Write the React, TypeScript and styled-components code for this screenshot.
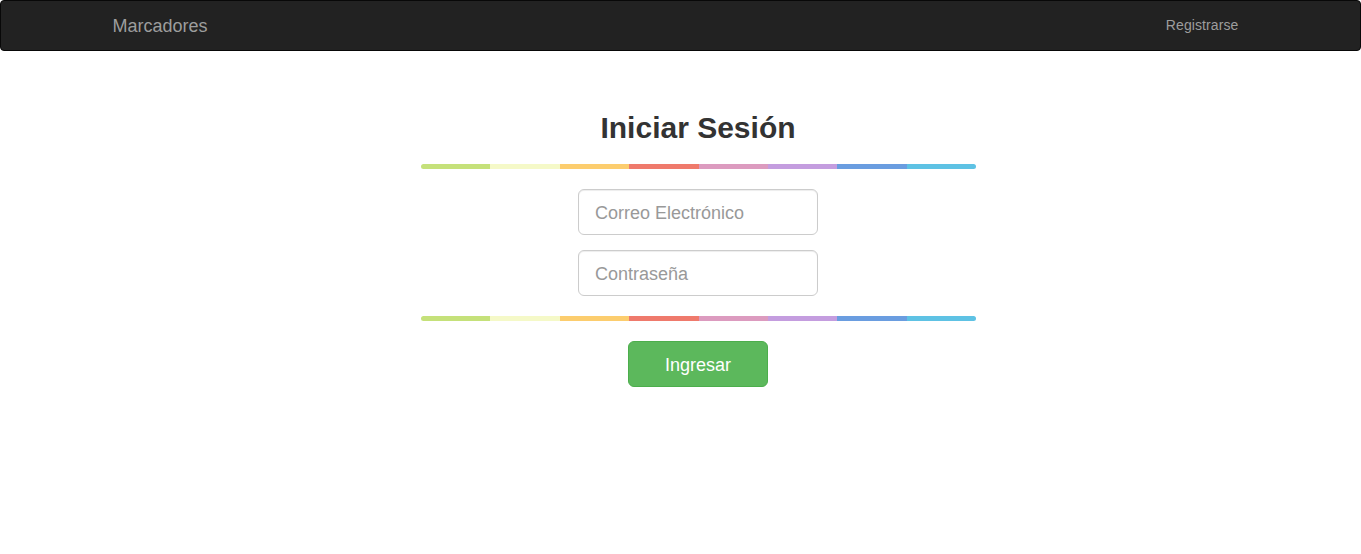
import React from "react";
import styled, { createGlobalStyle } from "styled-components";

const GlobalStyle = createGlobalStyle`
  * { box-sizing: border-box; }
  body {
    margin: 0;
    background: #fff;
    font-family: "Liberation Sans", Arial, Helvetica, sans-serif;
    font-size: 14px;
    color: #333;
  }
`;

const Navbar = styled.nav`
  height: 51px;
  background: #222;
  border: 1px solid #080808;
  border-radius: 4px;
`;

const NavInner = styled.div`
  width: 1170px;
  margin: 0 auto;
  height: 100%;
  display: flex;
  align-items: center;
  justify-content: space-between;
  padding: 0 12px 0 17px;
`;

const Brand = styled.a`
  font-size: 18px;
  line-height: 20px;
  color: #9d9d9d;
  text-decoration: none;
  padding-top: 1px;
`;

const NavLink = styled.a`
  font-size: 14px;
  line-height: 20px;
  color: #9d9d9d;
  text-decoration: none;
  padding: 0 15px 1px 15px;
  letter-spacing: 0.1px;
`;

const Main = styled.main`
  display: flex;
  flex-direction: column;
  align-items: center;
  padding: 60px 0 0 35px;
`;

const Title = styled.h2`
  margin: 0;
  font-size: 30px;
  line-height: 33px;
  font-weight: bold;
  color: #333;
  text-align: center;
`;

const Rainbow = styled.div<{ $top: number }>`
  display: flex;
  width: 555px;
  height: 5px;
  border-radius: 3px;
  overflow: hidden;
  margin: ${(p) => p.$top}px 0 0 1px;
`;

const Segment = styled.span<{ $color: string }>`
  flex: 1;
  background: ${(p) => p.$color};
`;

const Input = styled.input<{ $top: number }>`
  width: 240px;
  height: 46px;
  margin-top: ${(p) => p.$top}px;
  padding: 11px 16px 9px;
  font-family: "Liberation Sans", Arial, Helvetica, sans-serif;
  font-size: 18px;
  color: #555;
  border: 1px solid #ccc;
  border-radius: 6px;
  box-shadow: inset 0 1px 1px rgba(0, 0, 0, 0.075);
  outline: none;
  &::placeholder {
    color: #999;
  }
`;

const Button = styled.button`
  margin-top: 20px;
  width: 140px;
  height: 46px;
  padding: 2px 0 0;
  font-family: "Liberation Sans", Arial, Helvetica, sans-serif;
  font-size: 18px;
  color: #fff;
  background: #5cb85c;
  border: 1px solid #4cae4c;
  border-radius: 6px;
  cursor: pointer;
`;

const COLORS = [
  "#c5e17a",
  "#f5f9c8",
  "#fccd6e",
  "#ef7a6c",
  "#dc9bbf",
  "#c49ddf",
  "#6a9de0",
  "#5ec2e4",
];

const Bar = ({ top }: { top: number }) => (
  <Rainbow $top={top}>
    {COLORS.map((c) => (
      <Segment key={c} $color={c} />
    ))}
  </Rainbow>
);

export default function App() {
  return (
    <>
      <GlobalStyle />
      <Navbar>
        <NavInner>
          <Brand href="#">Marcadores</Brand>
          <NavLink href="#">Registrarse</NavLink>
        </NavInner>
      </Navbar>
      <Main>
        <Title>Iniciar Sesión</Title>
        <Bar top={20} />
        <Input $top={20} type="email" placeholder="Correo Electrónico" />
        <Input $top={15} type="password" placeholder="Contraseña" />
        <Bar top={20} />
        <Button type="button">Ingresar</Button>
      </Main>
    </>
  );
}
